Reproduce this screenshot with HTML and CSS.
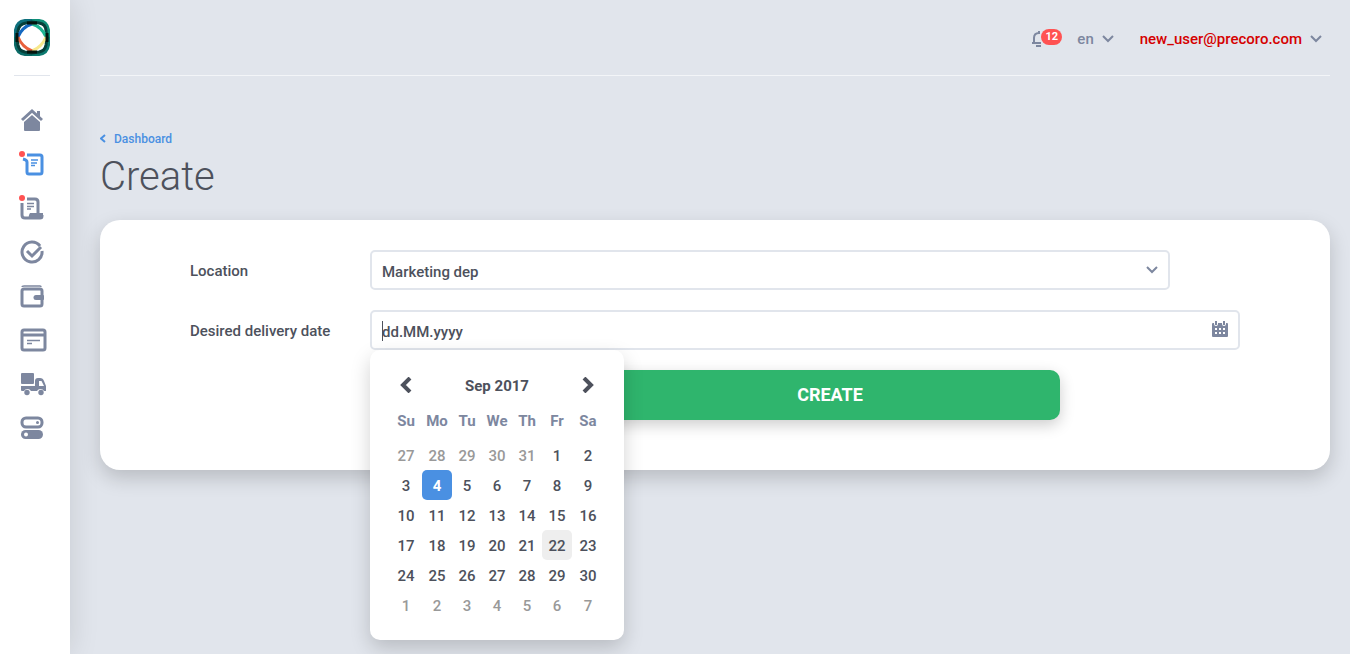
FILE: index.html
```html
<!DOCTYPE html>
<html lang="en">
<head>
  <meta charset="UTF-8">
  <meta name="viewport" content="width=device-width, initial-scale=1.0">
  <title>Create</title>
  <link rel="stylesheet" href="styles.css">
</head>
<body>
  <aside class="sidebar">
    <a class="logo" href="#" aria-label="Home page">
      <svg width="36" height="37" viewBox="0 0 36 37">
        <g class="logo-rings">
          <path d="M2 18V11Q3 3 11 2H18" stroke="#0d6f7c"/>
          <path d="M18 2H25Q33 3 34 11V18" stroke="#0f8f78"/>
          <path d="M34 18V26Q33 34 25 35H18" stroke="#0c7a70"/>
          <path d="M18 35H11Q3 34 2 26V18" stroke="#0a6a66"/>
          <path class="dark" d="M3 19 4 12Q5 5 12 4L18 3 25 4Q32 5 32 12L33 19 32 26Q31 32 25 33L18 34 11 33Q5 32 4 26Z"/>
          <path class="inner" d="M4 18Q8 8 18 5" stroke="#1468c0"/>
          <path class="inner" d="M18 5Q28 8 32 18" stroke="#1fb592"/>
          <path class="inner" d="M32 18Q28 28 18 32" stroke="#f8e88c"/>
          <path class="inner" d="M18 32Q8 28 4 18" stroke="#e8603c"/>
          <path class="node" d="M13 4h10M33 14v9M13 33h10M3 14v9"/>
        </g>
      </svg>
    </a>
    <nav class="side-nav">
      <a href="#" aria-label="Dashboard">
        <svg width="28" height="24" viewBox="0 0 28 24">
          <path class="line" d="M2 12 12 3l10 9"/>
          <path d="M17 3h3v6l-3-3zM12 7l8 7v8q0 1-1 1H5q-1 0-1-1v-8z"/>
        </svg>
      </a>
      <a class="active" href="#" aria-label="Requests">
        <svg width="28" height="24" viewBox="0 0 28 24">
          <path class="line" d="M7 3h13q2 0 2 2v15q0 2-2 2H9q-2 0-2-2V10q0-2-4-3"/>
          <path class="thin" d="M11 8h7M11 11h6M11 13.500h4"/>
          <circle class="dot" cx="2" cy="2" r="3"/>
        </svg>
      </a>
      <a href="#" aria-label="Orders">
        <svg width="28" height="24" viewBox="0 0 28 24">
          <path class="line" d="M7 3h8q3 0 3 3v12M2 7v12q0 3 3 3h15q2 0 2-2v-1"/>
          <path d="M10 17h13v3q0 3-3 3H5q4 0 4-4z"/>
          <path class="thin" d="M7 7.500h7M7 10.500h7M7 13h4"/>
          <circle class="dot" cx="2" cy="2" r="3"/>
        </svg>
      </a>
      <a href="#" aria-label="Approvals">
        <svg width="28" height="24" viewBox="0 0 28 24">
          <path class="line" d="M20 6A10 10 0 1 0 22 11"/>
          <path class="line" d="m7 11 5 5 9-9"/>
        </svg>
      </a>
      <a href="#" aria-label="Budgets">
        <svg width="28" height="24" viewBox="0 0 28 24">
          <path class="thin" d="M2 3q0-1 2-1h16q1 0 1 1"/>
          <rect class="line" x="2" y="5" width="20" height="17" rx="2"/>
          <path d="M16 11h7q1 0 1 1v3q0 1-1 1h-7a2.500 2.500 0 0 1 0-5z"/>
        </svg>
      </a>
      <a href="#" aria-label="Invoices">
        <svg width="28" height="24" viewBox="0 0 28 24">
          <rect class="line" x="2" y="2" width="23" height="20" rx="2"/>
          <path class="line" d="M2 7h23"/>
          <path class="thin" d="M7 12.500h13M7 15.500h5"/>
        </svg>
      </a>
      <a href="#" aria-label="Suppliers">
        <svg width="28" height="24" viewBox="0 0 28 24">
          <rect x="1" y="1" width="13" height="11" rx="1"/>
          <path d="M1 14h14V9q0-3 3-3h2q3 0 4 3l2 5v5h-2a4 4 0 0 0-7 0h-6a4 4 0 0 0-7 0H2q-1 0-1-1zM19 9v5h5l-2-4q0-1-1-1z" fill-rule="evenodd"/>
          <circle cx="7" cy="20.500" r="2.700"/>
          <circle cx="21" cy="20.500" r="2.700"/>
        </svg>
      </a>
      <a href="#" aria-label="Settings">
        <svg width="28" height="24" viewBox="0 0 28 24">
          <rect class="line" x="2" y="2" width="20" height="9" rx="4"/>
          <circle cx="17.500" cy="6.500" r="1.500"/>
          <rect x="1" y="14" width="22" height="9" rx="4.500"/>
          <circle class="hole" cx="6" cy="18.500" r="2"/>
        </svg>
      </a>
    </nav>
  </aside>

  <main class="page">
    <header class="topbar">
      <button class="bell" type="button" aria-label="Notifications">
        <svg width="16" height="18" viewBox="0 0 16 18">
          <path d="M1 13h9M3 13V8q0-5 5-5V1"/>
          <path d="M5 16h5"/>
        </svg>
        <span class="badge">12</span>
      </button>
      <button class="lang" type="button">en
        <svg class="chevron" width="12" height="8" viewBox="0 0 12 8"><path d="m1 1 5 5 5-5"/></svg>
      </button>
      <button class="user" type="button">new_user@precoro.com
        <svg class="chevron" width="12" height="8" viewBox="0 0 12 8"><path d="m1 1 5 5 5-5"/></svg>
      </button>
    </header>

    <a class="back" href="#">
      <svg width="6" height="10" viewBox="0 0 6 10"><path d="M5 1 1 4.500 5 8"/></svg>
      Dashboard
    </a>
    <h1>Create</h1>

    <form class="card">
      <div class="row">
        <label for="location">Location</label>
        <div class="field short">
          <select id="location">
            <option>Marketing dep</option>
          </select>
          <svg class="chevron field-icon" width="12" height="8" viewBox="0 0 12 8"><path d="m1 1 5 5 5-5"/></svg>
        </div>
      </div>
      <div class="row">
        <label for="date">Desired delivery date</label>
        <div class="field">
          <input id="date" type="text" placeholder="dd.MM.yyyy">
          <span class="caret"></span>
          <svg class="field-icon" width="16" height="16" viewBox="0 0 16 16">
            <path fill="#7d879f" fill-rule="evenodd" d="M1 2h1v1q0 2 2 2t2-2V2h4v1q0 2 2 2t2-2V2h1q1 0 1 1v12q0 1-1 1H1q-1 0-1-1V3q0-1 1-1zM3 7v2h2V7zM7 7v2h2V7zM11 7v2h2V7zM3 11v2h2v-2zM7 11v2h2v-2zM11 11v2h2v-2z"/>
            <path fill="#7d879f" d="M3 0h2v4H3zM11 0h2v4h-2z"/>
          </svg>

          <div class="calendar">
            <div class="calendar-head">
              <button type="button" aria-label="Previous month">
                <svg width="12" height="16" viewBox="0 0 12 16"><path d="M10 1 3 8l7 7"/></svg>
              </button>
              <span>Sep 2017</span>
              <button type="button" aria-label="Next month">
                <svg width="12" height="16" viewBox="0 0 12 16"><path d="m2 1 7 7-7 7"/></svg>
              </button>
            </div>
            <table>
              <thead>
                <tr><th>Su</th><th>Mo</th><th>Tu</th><th>We</th><th>Th</th><th>Fr</th><th>Sa</th></tr>
              </thead>
              <tbody>
                <tr><td class="other">27</td><td class="other">28</td><td class="other">29</td><td class="other">30</td><td class="other">31</td><td>1</td><td>2</td></tr>
                <tr><td>3</td><td class="today">4</td><td>5</td><td>6</td><td>7</td><td>8</td><td>9</td></tr>
                <tr><td>10</td><td>11</td><td>12</td><td>13</td><td>14</td><td>15</td><td>16</td></tr>
                <tr><td>17</td><td>18</td><td>19</td><td>20</td><td>21</td><td class="hover">22</td><td>23</td></tr>
                <tr><td>24</td><td>25</td><td>26</td><td>27</td><td>28</td><td>29</td><td>30</td></tr>
                <tr><td class="other">1</td><td class="other">2</td><td class="other">3</td><td class="other">4</td><td class="other">5</td><td class="other">6</td><td class="other">7</td></tr>
              </tbody>
            </table>
          </div>
        </div>
      </div>
      <div class="actions">
        <button class="submit" type="submit">CREATE</button>
      </div>
    </form>
  </main>
</body>
</html>
```
FILE: styles.css
```css
* {
  box-sizing: border-box;
}
body {
  margin: 0;
  min-height: 100vh;
  display: flex;
  background: #e1e5ec;
  color: #4d515c;
  font-family: Roboto, "Liberation Sans", sans-serif;
  font-size: 15px;
  font-weight: 500;
}
button, input, select {
  font: inherit;
  color: inherit;
}
button {
  padding: 0;
  border: 0;
  background: none;
  cursor: pointer;
}
a {
  text-decoration: none;
}
svg {
  display: block;
  fill: none;
  flex-shrink: 0;
}

/* sidebar */
.sidebar {
  width: 70px;
  flex-shrink: 0;
  background: #fff;
  box-shadow: 0 0 30px rgba(0, 0, 0, 0.12);
}
.logo {
  display: flex;
  justify-content: center;
  align-items: center;
  height: 76px;
  margin: 0 20px 0 14px;
  border-bottom: 1px solid #e1e5ec;
}
.logo-rings {
  fill: none;
  stroke-width: 4;
}
.logo-rings .dark {
  stroke: #06403a;
  stroke-width: 3;
}
.logo-rings .inner {
  stroke-width: 3;
}
.logo-rings .node {
  stroke: #04150f;
  stroke-width: 3;
}
.side-nav {
  display: flex;
  flex-direction: column;
  gap: 20px;
  padding: 32px 0 0 20px;
}
.side-nav a {
  color: #7d879f;
}
.side-nav .active {
  color: #4a90e2;
}
.side-nav svg {
  fill: currentColor;
  overflow: visible;
}
.side-nav .line, .side-nav .thin {
  fill: none;
  stroke: currentColor;
  stroke-width: 3;
}
.side-nav .thin {
  stroke-width: 1.5;
}
.side-nav .dot {
  fill: #ff5252;
}
.side-nav .hole {
  fill: #fff;
}

/* header */
.page {
  flex: 1;
  min-width: 0;
  padding: 0 20px 0 30px;
}
.topbar {
  display: flex;
  justify-content: flex-end;
  align-items: center;
  height: 76px;
  padding: 2px 8px 0 0;
  border-bottom: 1px solid #f3f5f8;
  color: #7d879f;
}
.bell {
  position: relative;
  width: 30px;
  margin-right: 16px;
}
.bell svg {
  stroke: #7d879f;
  stroke-width: 2;
}
.badge {
  position: absolute;
  top: -1px;
  left: 10px;
  width: 21px;
  border-radius: 8px;
  background: #ff5252;
  color: #fff;
  font-size: 11px;
  font-weight: 700;
  line-height: 16px;
}
.lang, .user {
  display: flex;
  align-items: center;
  gap: 8px;
}
.user {
  margin-left: 26px;
  color: #d50000;
}
.chevron {
  stroke: #7d879f;
  stroke-width: 2;
}

.back {
  display: flex;
  align-items: center;
  gap: 8px;
  margin-top: 54px;
  color: #4a90e2;
  font-size: 12px;
  line-height: 18px;
}
.back svg {
  stroke: #4a90e2;
  stroke-width: 2;
}
h1 {
  margin: 4px 0 18px;
  font-size: 40px;
  font-weight: 300;
  line-height: 50px;
}

/* form */
.card {
  padding: 30px 90px 50px;
  border-radius: 20px;
  background: #fff;
  box-shadow: 0 8px 20px rgba(0, 0, 0, 0.18);
}
.row {
  display: flex;
  align-items: center;
  margin-bottom: 20px;
}
.row label {
  width: 180px;
  flex-shrink: 0;
  padding-top: 2px;
}
.field {
  position: relative;
  flex: 1;
}
.field.short {
  margin-right: 70px;
}
.field input, .field select {
  display: block;
  width: 100%;
  height: 40px;
  padding: 3px 10px 0;
  border: 2px solid #e1e5ec;
  border-radius: 5px;
  outline: 0;
  background: #fff;
  appearance: none;
}
.field input::placeholder {
  color: inherit;
  opacity: 1;
}
.field-icon {
  position: absolute;
  top: 11px;
  right: 12px;
}
.chevron.field-icon {
  top: 16px;
}
.caret {
  position: absolute;
  top: 11px;
  left: 12px;
  width: 1px;
  height: 20px;
  background: #4d515c;
}
.actions {
  padding: 0 180px 0 410px;
}
.submit {
  width: 100%;
  height: 50px;
  padding-bottom: 2px;
  border-radius: 10px;
  background: #2fb56d;
  box-shadow: 0 5px 15px rgba(0, 0, 0, 0.2);
  color: #fff;
  font-size: 18px;
  font-weight: 700;
}

/* date picker */
.calendar {
  position: absolute;
  top: 100%;
  left: 0;
  z-index: 10;
  width: 254px;
  padding: 20px;
  border-radius: 10px;
  background: #fff;
  box-shadow: 0 8px 20px rgba(0, 0, 0, 0.18);
}
.calendar-head {
  display: flex;
  justify-content: space-between;
  align-items: center;
  height: 30px;
  padding: 0 10px;
  font-weight: 700;
}
.calendar-head span {
  padding-top: 2px;
}
.calendar-head svg {
  stroke: #4d515c;
  stroke-width: 4;
}
.calendar table {
  width: 100%;
  border-collapse: collapse;
  table-layout: fixed;
  text-align: center;
}
.calendar th {
  width: 30px;
  height: 40px;
  padding: 2px 0 0;
  color: #7d879f;
  font-weight: 700;
}
.calendar th:first-child, .calendar th:last-child {
  width: 32px;
}
.calendar td {
  height: 30px;
  padding: 2px 0 0;
  border-radius: 5px;
}
.calendar .other {
  color: #999;
}
.calendar .today {
  background: #4a90e2;
  color: #fff;
  font-weight: 700;
}
.calendar .hover {
  background: #eee;
}
```
